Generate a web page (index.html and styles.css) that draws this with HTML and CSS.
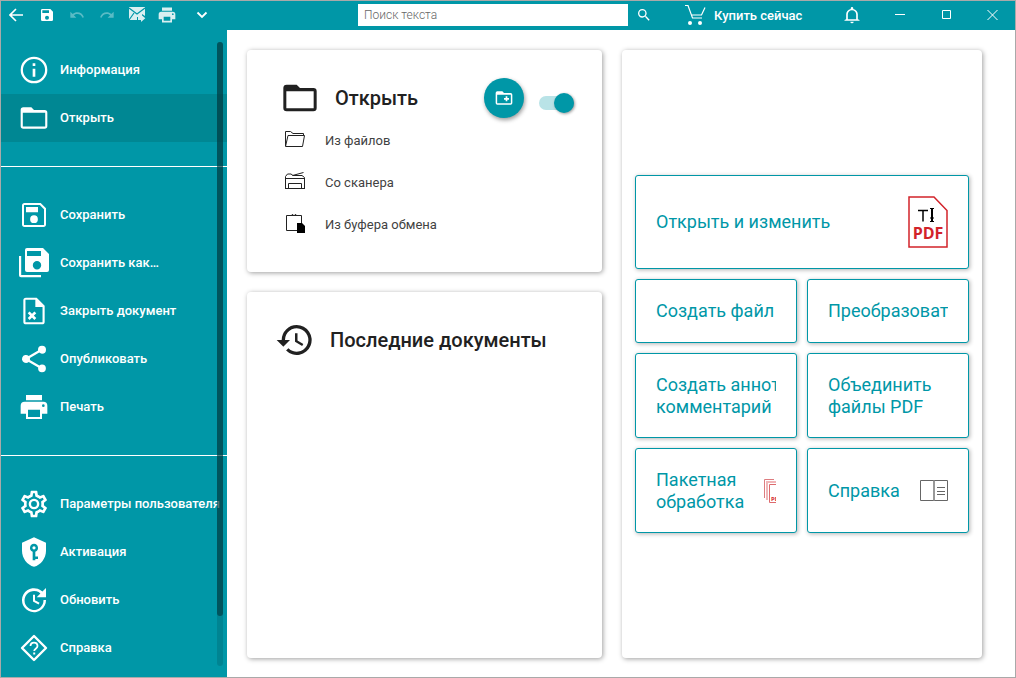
FILE: index.html
```html
<!DOCTYPE html>
<html lang="ru">
<head>
<meta charset="utf-8">
<title>PDF</title>
<link rel="stylesheet" href="styles.css">
</head>
<body>
<div class="window">
  <header class="titlebar">
    <div class="toolbar">
      <button class="tool" aria-label="Назад"><svg width="16" height="16" viewBox="0 0 16 16" fill="none" stroke="#fff" stroke-width="1.6"><path d="M14 8H1M7 2L1 8l6 6"/></svg></button>
      <button class="tool" aria-label="Сохранить"><svg width="16" height="16" viewBox="0 0 24 24" fill="#fff"><path d="M17 3H5a2 2 0 0 0-2 2v14a2 2 0 0 0 2 2h14a2 2 0 0 0 2-2V7zm-5 16a3 3 0 1 1 0-6 3 3 0 0 1 0 6zm3-10H5V5h10z"/></svg></button>
      <button class="tool dim" aria-label="Отменить" disabled><svg width="16" height="16" viewBox="0 0 24 24" fill="#fff"><path d="M12.5 8c-2.65 0-5.05.99-6.9 2.6L2 7v9h9l-3.62-3.62c1.39-1.16 3.16-1.88 5.12-1.88 3.54 0 6.55 2.31 7.6 5.5l2.37-.78C21.08 11.03 17.15 8 12.5 8z"/></svg></button>
      <button class="tool dim" aria-label="Повторить" disabled><svg width="16" height="16" viewBox="0 0 24 24" fill="#fff"><path d="M18.4 10.6C16.55 8.99 14.15 8 11.5 8c-4.65 0-8.58 3.03-9.96 7.22L3.9 16c1.05-3.19 4.05-5.5 7.6-5.5 1.95 0 3.73.72 5.12 1.88L13 16h9V7z"/></svg></button>
      <button class="tool soft" aria-label="Отправить по почте"><svg width="18" height="18" viewBox="0 0 18 18"><path fill="#fff" d="M1 1h16v9l-3-2v3H9v3H1z"/><path d="M1 2l8 6 8-6M1 14l5-7" fill="none" stroke="#0097a7" stroke-width="1.2"/><path fill="#fff" d="M10 11h3V8.500l4.300 3.800-4.300 3.800V14h-3z"/></svg></button>
      <button class="tool soft" aria-label="Печать"><svg width="20" height="20" viewBox="0 0 24 24" fill="#fff"><path d="M19 8H5a3 3 0 0 0-3 3v6h4v4h12v-4h4v-6a3 3 0 0 0-3-3zm-3 11H8v-5h8zm3-7a1 1 0 1 1 0-2 1 1 0 0 1 0 2zM18 3H6v4h12z"/></svg></button>
      <button class="tool more" aria-label="Ещё"><svg width="12" height="8" viewBox="0 0 12 8" fill="none" stroke="#fff" stroke-width="1.8"><path d="M1.5 1.500L6 6l4.500-4.500"/></svg></button>
    </div>
    <input class="search" type="text" placeholder="Поиск текста" aria-label="Поиск текста">
    <div class="actions">
      <button class="tool" aria-label="Найти"><svg width="16" height="16" viewBox="0 0 24 24" fill="#fff"><path d="M15.500 14h-.79l-.28-.27A6.470 6.470 0 0 0 16 9.500 6.500 6.500 0 1 0 9.500 16c1.610 0 3.090-.59 4.230-1.570l.27.28v.79l5 4.990L20.490 19zm-6 0a4.500 4.500 0 1 1 0-9 4.500 4.500 0 0 1 0 9z"/></svg></button>
      <a class="buy" href="#"><svg width="22" height="22" viewBox="0 0 22 22"><path d="M1 1.500h3L8.500 14H18M7 11h10.500L21 3.500" fill="none" stroke="#fff" stroke-width="1.200"/><circle cx="6" cy="19" r="2" fill="#fff"/><circle cx="16" cy="19" r="2" fill="#fff"/></svg>Купить сейчас</a>
      <button class="caption bell" aria-label="Уведомления"><svg width="20" height="20" viewBox="0 0 24 24" fill="#fff"><path d="M12 22a2 2 0 0 0 2-2h-4a2 2 0 0 0 2 2zm7-5v-6c0-3.070-2.130-5.640-5.500-6.320V4a1.500 1.500 0 0 0-3 0v.68C7.140 5.360 5 7.920 5 11v6l-2 1v1h18v-1zm-2 .2H7V11c0-2.480 2.010-4.700 5-4.700s5 2.220 5 4.700z"/></svg></button>
      <button class="caption" aria-label="Свернуть"><svg width="12" height="12" viewBox="0 0 12 12" stroke="#fff"><path d="M1 5.500h10"/></svg></button>
      <button class="caption" aria-label="Развернуть"><svg width="12" height="12" viewBox="0 0 12 12" stroke="#fff" fill="none"><path d="M2.500 1.500h8v8h-8z"/></svg></button>
      <button class="caption" aria-label="Закрыть"><svg width="12" height="12" viewBox="0 0 12 12" stroke="#fff"><path d="M1.500 1l10 10M11.500 1l-10 10"/></svg></button>
    </div>
  </header>

  <div class="body">
    <div class="sidebar">
      <nav class="menu">
        <a class="item" href="#"><svg viewBox="0 0 24 24"><path d="M11 7h2v2h-2zm0 4h2v6h-2zm1-9a10 10 0 1 0 0 20 10 10 0 0 0 0-20zm0 18.300a8.300 8.300 0 1 1 0-16.600 8.300 8.300 0 0 1 0 16.600z"/></svg><span>Информация</span></a>
        <a class="item active" href="#"><svg viewBox="0 0 24 24"><path d="M20 6h-8l-2-2H4a2 2 0 0 0-2 2v12a2 2 0 0 0 2 2h16a2 2 0 0 0 2-2V8a2 2 0 0 0-2-2zm.4 12.400H3.600V8h16.800z"/></svg><span>Открыть</span></a>
        <hr class="line">
        <a class="item" href="#"><svg viewBox="0 0 24 24"><path d="M17 3H5a2 2 0 0 0-2 2v14a2 2 0 0 0 2 2h14a2 2 0 0 0 2-2V7zm2.500 16.500h-15v-15h11.900l3.100 3.100zM12 12.200a2.900 2.900 0 1 0 0 5.800 2.900 2.900 0 0 0 0-5.800zM6 6h9v4H6z"/></svg><span>Сохранить</span></a>
        <a class="item" href="#"><svg viewBox="0 0 32 32"><path d="M9 1h16l6 6v16a2 2 0 0 1-2 2H9a2 2 0 0 1-2-2V3a2 2 0 0 1 2-2zm0 3v5h14V4zm10 10a4.200 4.200 0 1 0 0 8.400 4.200 4.200 0 0 0 0-8.400z"/><path d="M1 9h2.200v19H23v2.300H3a2 2 0 0 1-2-2z"/></svg><span>Сохранить как…</span></a>
        <a class="item" href="#"><svg viewBox="0 0 24 24"><path d="M14 2H6a2 2 0 0 0-2 2v16a2 2 0 0 0 2 2h12a2 2 0 0 0 2-2V8zm4.400 18.400H5.600V3.600H13V9h5.400z"/><path d="M8 13l5 5M13 13l-5 5" fill="none" stroke="#fff" stroke-width="2"/></svg><span>Закрыть документ</span></a>
        <a class="item" href="#"><svg viewBox="0 0 24 24"><path d="M18 16.080c-.76 0-1.440.3-1.960.77L8.910 12.700c.05-.23.09-.46.09-.7s-.04-.47-.09-.7l7.050-4.110c.54.5 1.250.81 2.040.81a3 3 0 1 0-3-3c0 .24.04.47.09.7L8.040 9.810A3 3 0 1 0 6 15c.79 0 1.500-.31 2.040-.81l7.120 4.160c-.05.21-.08.43-.08.65a2.920 2.920 0 1 0 2.920-2.920z"/></svg><span>Опубликовать</span></a>
        <a class="item" href="#"><svg viewBox="0 0 24 24"><path d="M19 8H5a3 3 0 0 0-3 3v6h4v4h12v-4h4v-6a3 3 0 0 0-3-3zm-2.500 11.500h-9V14h9zM19 12a1 1 0 1 1 0-2 1 1 0 0 1 0 2zM18 3H6v4h12z"/></svg><span>Печать</span></a>
        <hr class="line">
        <a class="item" href="#"><svg viewBox="0 0 24 24"><path d="M19.430 12.980c.04-.32.07-.64.07-.98s-.03-.66-.07-.98l2.110-1.650a.5.5 0 0 0 .12-.64l-2-3.460a.5.5 0 0 0-.61-.22l-2.490 1a7.300 7.300 0 0 0-1.690-.98l-.38-2.650A.49.49 0 0 0 14 2h-4a.49.49 0 0 0-.49.42l-.38 2.650c-.61.25-1.170.59-1.690.98l-2.490-1a.5.5 0 0 0-.61.220l-2 3.460a.5.5 0 0 0 .12.640l2.110 1.650a7.900 7.900 0 0 0 0 1.960l-2.110 1.650a.5.5 0 0 0-.12.640l2 3.460c.12.220.39.3.61.220l2.490-1c.52.4 1.080.73 1.690.98l.38 2.650c.03.24.24.42.49.42h4c.25 0 .46-.18.49-.42l.38-2.650c.61-.25 1.170-.59 1.690-.98l2.490 1c.23.09.49 0 .61-.22l2-3.460a.5.5 0 0 0-.12-.64zm-1.980-1.710a5.300 5.300 0 0 1 0 1.460l-.14 1.130 1.960 1.540-.7 1.210-2.320-.93-.94.730a5.700 5.700 0 0 1-1.250.73l-1.060.43-.36 2.430h-1.340l-.36-2.430-1.060-.43a5.700 5.700 0 0 1-1.240-.71l-.94-.74-2.320.92-.7-1.210 1.960-1.540-.14-1.130a5.300 5.300 0 0 1 0-1.460l.14-1.130-1.960-1.540.7-1.210 2.320.93.940-.73a5.700 5.700 0 0 1 1.250-.73l1.060-.43.36-2.430h1.340l.36 2.430 1.060.43c.43.180.83.410 1.230.71l.94.74 2.320-.92.700 1.210-1.960 1.540zM12 8a4 4 0 1 0 0 8 4 4 0 0 0 0-8zm0 6.200a2.200 2.200 0 1 1 0-4.400 2.200 2.200 0 0 1 0 4.400z"/></svg><span>Параметры пользователя</span></a>
        <a class="item" href="#"><svg viewBox="0 0 24 24"><path d="M12 1L3 5v6c0 5.550 3.840 10.740 9 12 5.160-1.260 9-6.450 9-12V5z"/><path fill="#0097a7" d="M12 5.800a3.100 3.100 0 0 0-1 6v6.400h2v-.9h2v-2h-2v-3.500a3.100 3.100 0 0 0-1-6zm0 1.900a1.200 1.200 0 1 1 0 2.400 1.200 1.200 0 0 1 0-2.400z"/></svg><span>Активация</span></a>
        <a class="item" href="#"><svg viewBox="0 0 24 24"><path d="M21 3v7h-7l2.800-2.900A7.100 7.100 0 1 0 19.100 12H21a9 9 0 1 1-2.700-6.300z"/><path d="M12 8v4.600l3.800 2.200" fill="none" stroke="#fff" stroke-width="1.500"/></svg><span>Обновить</span></a>
        <a class="item" href="#"><svg viewBox="0 0 32 32"><path d="M16 4L28 16 16 28 4 16z" fill="none" stroke="#fff" stroke-width="2.400" stroke-linejoin="round"/><path d="M12.500 14c0-4.600 7-4.600 7 0 0 2.600-3.300 2.800-3.300 5" fill="none" stroke="#fff" stroke-width="1.800"/><path d="M15.200 20.500h2v2h-2z"/></svg><span>Справка</span></a>
      </nav>
      <div class="track"><div class="thumb"></div></div>
    </div>

    <main class="content">
      <div class="column">
        <section class="card open">
          <div class="head">
            <svg width="40" height="40" viewBox="0 0 24 24" fill="#212121"><path d="M20 6h-8l-2-2H4a2 2 0 0 0-2 2v12a2 2 0 0 0 2 2h16a2 2 0 0 0 2-2V8a2 2 0 0 0-2-2zm.2 12.200H3.800V8h16.400z"/></svg>
            <h2>Открыть</h2>
            <button class="fab" aria-label="Новая папка"><svg width="20" height="20" viewBox="0 0 24 24" fill="#fff"><path d="M20 6h-8l-2-2H4a2 2 0 0 0-2 2v12a2 2 0 0 0 2 2h16a2 2 0 0 0 2-2V8a2 2 0 0 0-2-2zm.2 12.200H3.800V8h16.400zM14 16h2v-2h2v-2h-2v-2h-2v2h-2v2h2z"/></svg></button>
            <input class="switch" type="checkbox" checked aria-label="Показывать папки">
          </div>
          <a class="source" href="#"><svg width="20" height="20" viewBox="0 0 20 20" fill="none" stroke="#222" stroke-width="1"><path d="M.5 16V1.500h5L8 3.500h10.500V6M.5 16.500L3 5.500h16.500l-2 11z"/></svg>Из файлов</a>
          <a class="source" href="#"><svg width="20" height="20" viewBox="0 0 20 20" fill="none" stroke="#222" stroke-width="1"><path d="M.5 17V4.500L2.500 2H6l2 1.500h9l2.500 2V17M.5 6.500h19M7.500 3.500l11-3M3.500 16v-4.500h13V16M.5 16.500h19"/></svg>Со сканера</a>
          <a class="source" href="#"><svg width="20" height="20" viewBox="0 0 20 20"><path d="M12 16.500H1.500v-15h15V10M5 1.500h2a2 2 0 0 1 4 0h2" fill="none" stroke="#222"/><path d="M12 9h5l3 3v7h-8z"/></svg>Из буфера обмена</a>
        </section>
        <section class="card recent">
          <div class="head">
            <svg width="40" height="40" viewBox="0 0 24 24" fill="#212121"><path d="M13 3a9 9 0 0 0-9 9H1l3.890 3.890.07.14L9 12H6a7 7 0 1 1 2.060 4.940l-1.420 1.420A9 9 0 1 0 13 3zm-1 5v5l4.280 2.540.72-1.210-3.500-2.080V8z"/></svg>
            <h2>Последние документы</h2>
          </div>
        </section>
      </div>

      <section class="card tasks">
        <div class="tiles">
          <button class="tile large"><span>Открыть и изменить</span>
            <svg width="40" height="52" viewBox="0 0 40 52"><path d="M1 1h25l13 13.500V51H1z" fill="#fff" stroke="#d2232a" stroke-width="1.500"/><path d="M10 14.500h10M15 15v10.500" fill="none" stroke="#000" stroke-width="1.500"/><path d="M22 12.500h4M22 25.500h4" stroke="#000"/><path d="M24 12.500v13M22.500 22h3" stroke="#000" stroke-width="2"/><text class="pdf" x="20" y="43">PDF</text></svg></button>
          <button class="tile small"><span>Создать файл</span></button>
          <button class="tile small"><span>Преобразовать</span></button>
          <button class="tile"><span>Создать аннотацию<br>комментарий</span></button>
          <button class="tile"><span>Объединить<br>файлы PDF</span></button>
          <button class="tile"><span>Пакетная<br>обработка</span>
            <svg width="28" height="24" viewBox="0 0 28 24" fill="none"><path d="M.5 19V.5H10" stroke="#dd7c7f"/><path d="M3 21V3h15" stroke="#f0b6b8" stroke-width="2"/><path d="M22 5.500H5.500v18H22" stroke="#dd6a6e"/><text class="mini" x="7" y="22">PDF</text></svg></button>
          <button class="tile"><span>Справка</span>
            <svg width="28" height="22" viewBox="0 0 28 22" fill="none" stroke="#666"><path d="M.5.500h27v20H.500z"/><path d="M14 .5V20.500" stroke="#999" stroke-width="2"/><path d="M17 7.500h8M17 11.500h8M17 14.500h8"/></svg></button>
        </div>
      </section>
    </main>
  </div>
</div>
</body>
</html>
```
FILE: styles.css
```css
* { box-sizing: border-box; }

body {
  margin: 0;
  font-family: Roboto, "Liberation Sans", sans-serif;
  font-size: 13px;
  color: #212121;
}

button {
  font: inherit;
  border: 0;
  padding: 0;
  background: none;
}

a { color: inherit; text-decoration: none; }
svg { flex: none; }

.window {
  display: flex;
  flex-direction: column;
  height: 100vh;
  border: 1px solid #a9a9a9;
  background: #fff;
}

.titlebar {
  display: flex;
  flex: none;
  height: 29px;
  align-items: center;
  padding-bottom: 1px;
  background: #0097a7;
  color: #fff;
}

.toolbar { display: flex; flex: 357 1 0; padding-left: 1px; }
.actions { display: flex; flex: 387 1 0; align-items: center; padding-left: 1px; }

.tool, .caption {
  display: flex;
  align-items: center;
  justify-content: center;
  width: 30px;
  height: 28px;
}

.dim { opacity: .35; }
.soft { opacity: .85; }
.more { margin-left: 5px; }

.search {
  flex: 0 1 270px;
  min-width: 0;
  height: 22px;
  padding: 0 6px 1px;
  border: 0;
  background: #fff;
  font: 300 12px Roboto, sans-serif;
}
.search::placeholder { color: #666; opacity: 1; }

.buy {
  display: flex;
  align-items: center;
  gap: 8px;
  margin-left: 25px;
  font-weight: 500;
  white-space: nowrap;
}

.caption { width: 46px; }
.bell { margin-left: auto; margin-right: 2px; }

.body { display: flex; flex: 1; min-height: 0; }

.sidebar {
  position: relative;
  flex: none;
  width: 226px;
  overflow: hidden;
  background: #0097a7;
  color: #fff;
}

.menu { padding-top: 16px; }

.item {
  display: flex;
  align-items: center;
  gap: 10px;
  height: 48px;
  padding-left: 17px;
  font-weight: 500;
  line-height: 16px;
  white-space: nowrap;
}
.item svg { width: 32px; height: 32px; fill: #fff; }
.item.active { background: #008793; }

.line {
  height: 1px;
  margin: 24px 0;
  border: 0;
  background: #fff;
}

.track {
  position: absolute;
  top: 12px;
  right: 4px;
  bottom: 11px;
  width: 6px;
  border-radius: 3px;
  background: rgba(0, 0, 0, .12);
}
.thumb {
  height: 92%;
  border-radius: 3px;
  background: rgba(0, 55, 61, .62);
}

.content {
  display: grid;
  grid-template-columns: minmax(0, 355fr) minmax(0, 360fr);
  flex: 1;
  gap: 20px;
  min-width: 0;
  padding: 20px 33px 19px 20px;
}

.column {
  display: flex;
  flex-direction: column;
  gap: 20px;
  min-width: 0;
}

.card {
  border-radius: 4px;
  background: #fff;
  box-shadow: 1px 1px 5px rgba(0, 0, 0, .38);
}

.head { display: flex; align-items: center; height: 40px; }

h2 {
  margin: 0;
  font-size: 20px;
  font-weight: 500;
  white-space: nowrap;
}

.open { padding: 28px 28px 27px; }
.open .head { padding-left: 5px; margin-bottom: 1px; gap: 15px; }

.fab {
  display: flex;
  align-items: center;
  justify-content: center;
  width: 40px;
  height: 40px;
  margin-left: auto;
  border-radius: 50%;
  background: #0097a7;
  box-shadow: 1px 2px 4px rgba(0, 0, 0, .4);
}

.switch {
  appearance: none;
  display: flex;
  align-items: center;
  justify-content: flex-end;
  width: 35px;
  height: 14px;
  margin: 10px 0 0;
  border-radius: 7px;
  background: #b9e3e7;
}
.switch::before {
  content: "";
  width: 20px;
  height: 20px;
  flex: none;
  border-radius: 50%;
  background: #0097a7;
  box-shadow: 1px 1px 3px rgba(0, 0, 0, .4);
}

.source {
  display: flex;
  align-items: center;
  gap: 20px;
  height: 42px;
  padding-left: 10px;
  color: #424242;
}

.recent { flex: 1; padding: 28px; }
.recent .head { gap: 15px; }

.tasks {
  display: flex;
  flex-direction: column;
  justify-content: center;
  min-width: 0;
  padding: 0 13px;
}

.tiles {
  display: grid;
  grid-template-columns: repeat(2, minmax(0, 1fr));
  gap: 10px;
}

.tile {
  display: flex;
  align-items: center;
  justify-content: space-between;
  gap: 20px;
  height: 85px;
  padding: 0 20px;
  border: 1px solid #0097a7;
  border-radius: 3px;
  background: #fff;
  box-shadow: 1px 1px 4px rgba(0, 0, 0, .3);
  color: #0097a7;
  font-size: 18px;
  line-height: 22px;
  text-align: left;
  white-space: nowrap;
  overflow: clip;
  overflow-clip-margin: content-box;
}
.tile.large { grid-column: 1 / -1; height: 94px; }
.tile.small { height: 64px; }

.pdf {
  font: 700 16px "Open Sans", sans-serif;
  fill: #d2232a;
  text-anchor: middle;
}
.mini { font: 700 6px "Open Sans", sans-serif; fill: #d2232a; }
```
